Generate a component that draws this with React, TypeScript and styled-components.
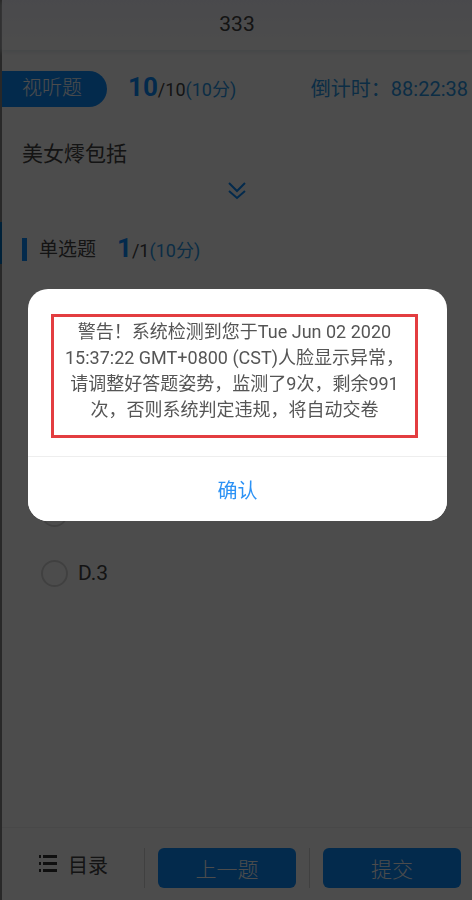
import React from 'react';
import styled, { createGlobalStyle } from 'styled-components';

const GlobalStyle = createGlobalStyle`
  * { box-sizing: border-box; }
  html, body { margin: 0; background: #ffffff; }
  body, button, input {
    font-family: Roboto, "Noto Sans CJK SC", sans-serif;
  }
`;

const Page = styled.div`
  min-height: 100vh;
  padding-left: 2px;
  display: flex;
  flex-direction: column;
  background:
    linear-gradient(#858585 222px, #006fc0 222px, #006fc0 264px, #858585 264px) left top / 2px 100% no-repeat,
    #ffffff;
  color: #444444;
`;

const Header = styled.header`
  height: 50px;
  padding-bottom: 2px;
  display: flex;
  align-items: center;
  justify-content: center;
  background: linear-gradient(#f6f6fe, #ffffff);
  box-shadow: 0 2px 5px #e4eaee;
`;

const Title = styled.h1`
  margin: 0;
  font-size: 21px;
  font-weight: 400;
`;

const Main = styled.main`
  flex: 1;
`;

const StatusRow = styled.div`
  margin-top: 19px;
  display: flex;
  align-items: center;
`;

const Tag = styled.span`
  width: 105px;
  height: 36px;
  padding-left: 20px;
  border-radius: 0 18px 18px 0;
  background: #0a8cff;
  color: #ffffff;
  font-size: 20px;
  font-weight: 300;
  line-height: 34px;
`;

const Progress = styled.span`
  margin-left: 21px;
  font-size: 18px;
  line-height: 36px;
  white-space: nowrap;
`;

const Current = styled.b`
  color: #0a8cff;
  font-size: 26px;
`;

const Points = styled.span`
  color: #2a98e8;
`;

const Countdown = styled.span`
  margin-left: auto;
  padding-right: 4px;
  color: #2a98e8;
  font-size: 20px;
  line-height: 36px;
  white-space: nowrap;
`;

const Question = styled.p`
  margin: 31px 20px 0;
  font-size: 21px;
  line-height: 30px;
`;

const Expand = styled.button`
  display: block;
  margin: 13px auto 0;
  padding: 0;
  border: 0;
  background: none;
  line-height: 0;
`;

const SectionRow = styled.div`
  margin: 30px 20px 0;
  display: flex;
  align-items: center;
`;

const Marker = styled.span`
  width: 5px;
  height: 23px;
  background: #0a8cff;
`;

const SectionName = styled.h2`
  margin: 0 0 0 12px;
  font-size: 19px;
  font-weight: 400;
  line-height: 36px;
`;

const Options = styled.div`
  margin: 214px 0 0 39px;
  display: grid;
`;

const Option = styled.label`
  display: flex;
  align-items: center;
  height: 60px;
  font-size: 21px;
`;

const Radio = styled.input`
  appearance: none;
  width: 27px;
  height: 27px;
  margin: 0 10px 0 0;
  border: 2px solid #d8d8d8;
  border-radius: 50%;
`;

const Footer = styled.footer`
  height: 73px;
  padding: 20px 11px 12px 0;
  display: grid;
  grid-template-columns: 129px 1px 1fr 1px 1fr;
  column-gap: 13px;
  border-top: 1px solid #f2f2f2;
`;

const Directory = styled.button`
  padding: 0 0 8px 36px;
  display: flex;
  align-items: center;
  gap: 10px;
  border: 0;
  background: none;
  color: #444444;
  font-size: 20px;
  white-space: nowrap;
`;

const Divider = styled.span`
  background: #d8d8d8;
`;

const Action = styled.button`
  padding: 0;
  border: 0;
  border-radius: 6px;
  background: #0a8cff;
  color: #ffffff;
  font-size: 21px;
  font-weight: 300;
`;

const Overlay = styled.div`
  position: fixed;
  inset: 0;
  padding: 0 25px 0 28px;
  display: grid;
  align-content: center;
  background: rgba(0, 0, 0, 0.7);
`;

const Dialog = styled.section`
  margin-bottom: 90px;
  border-radius: 20px;
  overflow: hidden;
  background: #ffffff;
`;

const DialogBody = styled.div`
  padding: 25px 29px 18px 23px;
  border-bottom: 1px solid #eeeeee;
`;

const Warning = styled.p`
  margin: 0;
  padding: 2px 8px 12px;
  border: 3px solid #e33d40;
  color: #555555;
  font-size: 18px;
  line-height: 26px;
  text-align: center;
`;

const Confirm = styled.button`
  width: 100%;
  height: 64px;
  padding: 0;
  border: 0;
  background: #ffffff;
  color: #2c92f5;
  font-size: 20px;
`;

export default function App() {
  return (
    <>
      <GlobalStyle />
      <Page>
        <Header><Title>333</Title></Header>
        <Main>
          <StatusRow>
            <Tag>视听题</Tag>
            <Progress><Current>10</Current>/10<Points>(10分)</Points></Progress>
            <Countdown>倒计时：88:22:38</Countdown>
          </StatusRow>
          <Question>美女燯包括</Question>
          <Expand aria-label="展开">
            <svg width="18" height="18" viewBox="0 0 18 18" fill="none" stroke="#0a8cff" strokeWidth="2">
              <path d="M1 1l8 8 8-8M1 9l8 7 8-7" />
            </svg>
          </Expand>
          <SectionRow>
            <Marker />
            <SectionName>单选题</SectionName>
            <Progress><Current>1</Current>/1<Points>(10分)</Points></Progress>
          </SectionRow>
          <Options>
            <Option><Radio type="radio" name="answer" aria-label="C" /></Option>
            <Option><Radio type="radio" name="answer" />D.3</Option>
          </Options>
        </Main>
        <Footer>
          <Directory>
            <svg width="20" height="18" viewBox="0 0 20 18" fill="#333333">
              <path d="M1 0h2v3H1zM5 0h14v3H5zM1 7h2v3H1zM5 7h14v3H5zM1 14h2v3H1zM5 14h14v3H5z" />
            </svg>
            目录
          </Directory>
          <Divider />
          <Action>上一题</Action>
          <Divider />
          <Action>提交</Action>
        </Footer>
      </Page>
      <Overlay>
        <Dialog role="alertdialog" aria-modal="true" aria-describedby="warning">
          <DialogBody>
            <Warning id="warning">
              警告！系统检测到您于Tue Jun 02 2020 15:37:22 GMT+0800 (CST)人脸显示异常，请调整好答题姿势，监测了9次，剩余991次，否则系统判定违规，将自动交卷
            </Warning>
          </DialogBody>
          <Confirm>确认</Confirm>
        </Dialog>
      </Overlay>
    </>
  );
}
